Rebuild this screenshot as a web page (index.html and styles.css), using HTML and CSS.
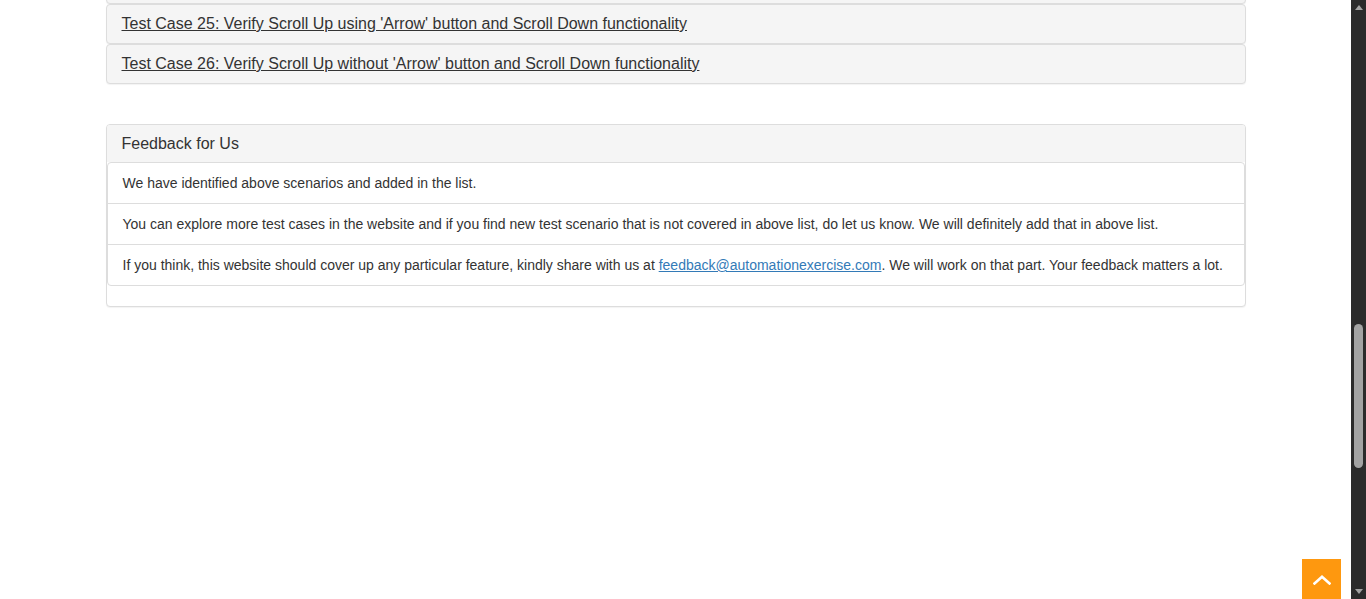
FILE: index.html
```html
<!DOCTYPE html>
<html lang="en">
<head>
<meta charset="utf-8">
<title>Test Cases</title>
<link rel="stylesheet" href="styles.css">
</head>
<body>
<div class="page">
  <main class="viewport">
    <div class="container">
      <div class="panel-group">
        <div class="panel"><div class="panel-heading"></div></div>
        <div class="panel"><div class="panel-heading"><a href="#">Test Case 25: Verify Scroll Up using 'Arrow' button and Scroll Down functionality</a></div></div>
        <div class="panel"><div class="panel-heading"><a href="#">Test Case 26: Verify Scroll Up without 'Arrow' button and Scroll Down functionality</a></div></div>
      </div>
      <div class="panel feedback">
        <div class="feedback-heading">Feedback for Us</div>
        <ul class="list-group">
          <li class="list-item">We have identified above scenarios and added in the list.</li>
          <li class="list-item">You can explore more test cases in the website and if you find new test scenario that is not covered in above list, do let us know. We will definitely add that in above list.</li>
          <li class="list-item">If you think, this website should cover up any particular feature, kindly share with us at <a class="mail" href="#">feedback@automationexercise.com</a>. We will work on that part. Your feedback matters a lot.</li>
        </ul>
      </div>
    </div>
  </main>
  <aside class="scrollbar">
    <div class="sb-btn"><span class="tri-up"></span></div>
    <div class="sb-track"><div class="sb-thumb"></div></div>
    <div class="sb-btn"><span class="tri-down"></span></div>
  </aside>
</div>
<a class="scroll-up" href="#" aria-label="Scroll up">
  <svg width="18" height="10" viewBox="0 0 18 10"><path d="M1.5 8.5 L9 1.8 L16.5 8.5" fill="none" stroke="#fff" stroke-width="2.6" stroke-linecap="square"/></svg>
</a>
</body>
</html>
```
FILE: styles.css
```css
html, body {
  margin: 0;
  padding: 0;
  height: 100%;
  overflow: hidden;
  background: #fff;
}
body {
  font-family: "Liberation Sans", Arial, sans-serif;
  font-size: 14px;
  line-height: 20px;
  color: #333;
}
.page {
  display: flex;
  height: 599px;
}
.viewport {
  flex: 1;
  min-width: 0;
}
.container {
  width: 1140px;
  margin: -36px auto 0;
  padding: 0 15px;
  box-sizing: content-box;
}
.panel {
  border: 1px solid #ddd;
  border-radius: 4px;
  background: #f5f5f5;
  box-shadow: 0 1px 1px rgba(0,0,0,0.05);
}
.panel-heading {
  padding: 10px 15px;
  height: 18px;
  font-size: 16px;
  line-height: 18px;
}
.panel-heading a {
  color: #333;
  text-decoration: underline;
}
.feedback {
  margin-top: 40px;
  background: #fff;
}
.feedback-heading {
  background: #f5f5f5;
  padding: 10px 15px;
  height: 17px;
  font-size: 16px;
  line-height: 17px;
  border-radius: 3px 3px 0 0;
}
.list-group {
  list-style: none;
  margin: 0 0 20px;
  padding: 0;
  border: 1px solid #ddd;
  border-radius: 4px;
  background: #fff;
}
.list-item {
  padding: 10px 15px;
  line-height: 20px;
  border-top: 1px solid #ddd;
}
.list-item:first-child {
  border-top: 0;
}
.mail {
  color: #337ab7;
  text-decoration: underline;
}
.scrollbar {
  width: 15px;
  flex: 0 0 15px;
  background: #2b2b2b;
  display: flex;
  flex-direction: column;
}
.sb-btn {
  height: 15px;
  display: flex;
  align-items: center;
  justify-content: center;
}
.tri-up, .tri-down {
  width: 0;
  height: 0;
  border-left: 4.5px solid transparent;
  border-right: 4.5px solid transparent;
}
.tri-up { border-bottom: 5px solid #a3a3a3; }
.tri-down { border-top: 5px solid #a3a3a3; }
.sb-track {
  flex: 1;
  display: flex;
  justify-content: center;
}
.sb-thumb {
  width: 9px;
  height: 144px;
  margin-top: 309px;
  border-radius: 5px;
  background: #a3a3a3;
}
.scroll-up {
  position: fixed;
  right: 25px;
  bottom: 0;
  width: 39px;
  height: 40px;
  background: #fe980f;
  display: flex;
  align-items: center;
  justify-content: center;
}
.scroll-up svg {
  margin-top: 2px;
}
```
